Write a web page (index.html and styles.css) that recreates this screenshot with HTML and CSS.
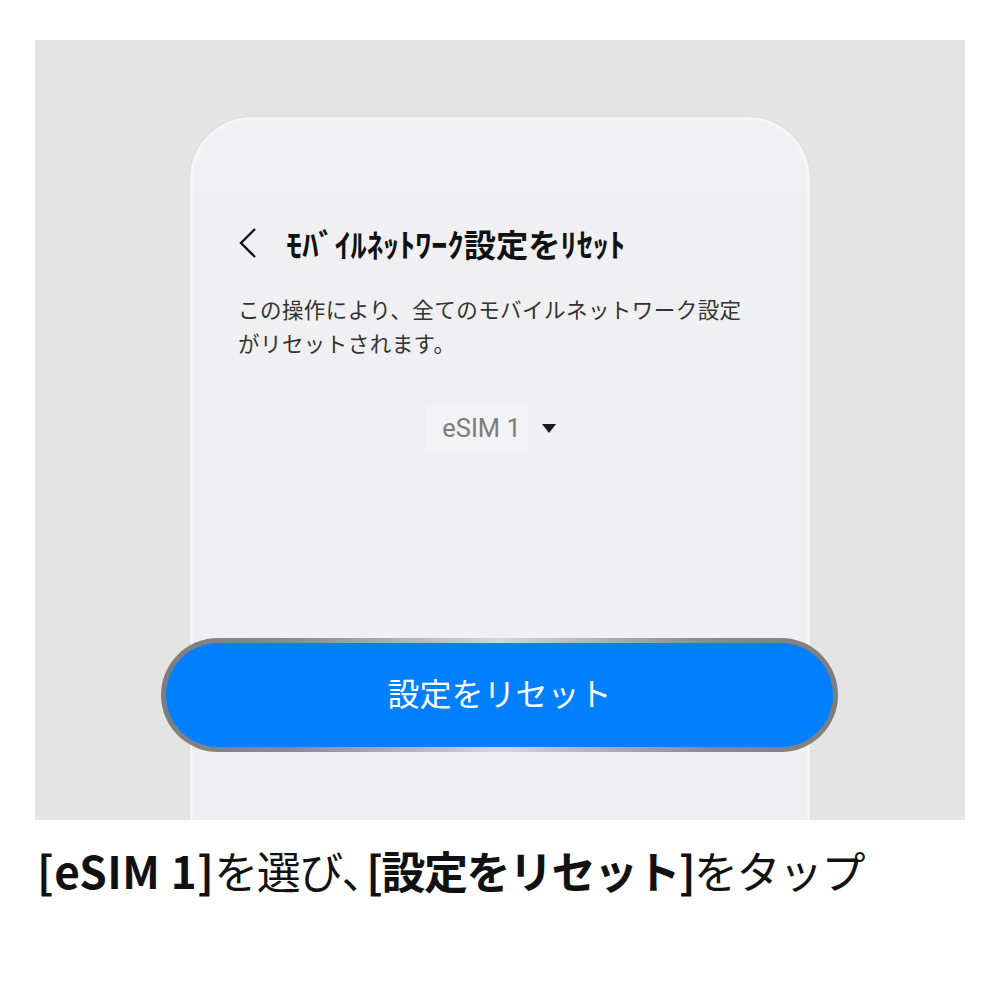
FILE: index.html
```html
<!DOCTYPE html>
<html lang="ja">
<head>
  <meta charset="UTF-8" />
  <meta name="viewport" content="width=device-width, initial-scale=1" />
  <title>eSIM 設定リセット</title>
  <link rel="stylesheet" href="styles.css">
</head>
<body>
  <div class="stage">
    <div class="phone">
      <div class="status-bar"></div>
      <div class="header">
        <svg class="back" width="18" height="32" viewBox="0 0 18 32">
          <polyline points="16,2 2,16 16,30" fill="none" stroke="#111" stroke-width="2.4" />
        </svg>
        <span class="title">ﾓﾊﾞｲﾙﾈｯﾄﾜｰｸ設定をﾘｾｯﾄ</span>
      </div>

      <p class="desc">この操作により、全てのモバイルネットワーク設定<br>がリセットされます。</p>

      <div class="sim-select">
        <span class="sim-name">eSIM 1</span>
        <span class="caret"></span>
      </div>

      <div class="reset-ring">
        <button type="button" class="reset-btn">設定をリセット</button>
      </div>
    </div>
  </div>

  <p class="caption"><b class="latin">[eSIM 1]</b>を選び<span class="punct">、</span><b>[設定をリセット]</b>をタップ</p>
</body>
</html>
```

FILE: styles.css
```css
body {
  margin: 0;
  background: #fff;
  font-family: "Noto Sans CJK JP", "Noto Sans", sans-serif;
  color: #222;
}

.stage {
  margin: 40px 35px 0;
  height: 780px;
  background-color: #e4e4e4;
  overflow: hidden;
  padding-top: 77px;
  box-sizing: border-box;
}

.phone {
  width: 620px;
  height: 720px;
  margin: 0 auto;
  box-sizing: border-box;
  background-color: #f0f0f2;
  border: 3px solid #f6f6f7;
  border-bottom: none;
  border-radius: 62px 62px 0 0;
  box-shadow: 0 0 3px rgba(0,0,0,0.08);
}

.status-bar {
  height: 72px;
  border-bottom: 1px solid #eeeef0;
  background-color: #f1f1f3;
  border-radius: 60px 60px 0 0;
}

.header {
  display: flex;
  align-items: center;
  height: 50px;
  margin-top: 25px;
  padding-left: 46px;
}

.back {
  display: block;
}

.title {
  margin-left: 29px;
  font-size: 32.3px;
  font-weight: 700;
  color: #111;
}

.desc {
  margin: 24px 0 0 45px;
  font-size: 21.5px;
  line-height: 34px;
  color: #333;
  letter-spacing: 0.45px;
}

.sim-select {
  display: flex;
  align-items: center;
  justify-content: center;
  margin-top: 45px;
  height: 47px;
  padding-right: 17px;
}

.sim-name {
  font-family: Roboto, "Liberation Sans", sans-serif;
  font-size: 25.5px;
  color: #7d7d7d;
  background-color: #f3f3f5;
  padding: 0 8px 0 15px;
  line-height: 47px;
}

.caret {
  width: 0;
  height: 0;
  margin-left: 13px;
  border-left: 7px solid transparent;
  border-right: 7px solid transparent;
  border-top: 9px solid #1a1a1a;
}

.reset-ring {
  margin: 186px -31px 0 -32px;
  padding: 5px;
  height: 114px;
  box-sizing: border-box;
  border-radius: 57px;
  background: linear-gradient(90deg, #7d7d7d 0%, #8c8c8c 20%, #d6d6d6 50%, #8c8c8c 80%, #7d7d7d 100%);
}

.reset-btn {
  display: block;
  width: 100%;
  height: 100%;
  border: none;
  border-radius: 52px;
  background-color: #0080ff;
  color: #fff;
  font-family: "Noto Sans CJK JP", sans-serif;
  font-size: 32px;
  font-weight: 400;
  padding: 0 0 7px;
}

.caption {
  margin: 22px 0 0 37px;
  font-size: 44px;
  line-height: 56px;
  color: #111;
  letter-spacing: -1.5px;
}

.caption b {
  font-weight: 700;
}

.caption .latin {
  letter-spacing: 0.5px;
}

.caption .punct {
  font-feature-settings: "palt";
  margin-right: 4px;
}
```
